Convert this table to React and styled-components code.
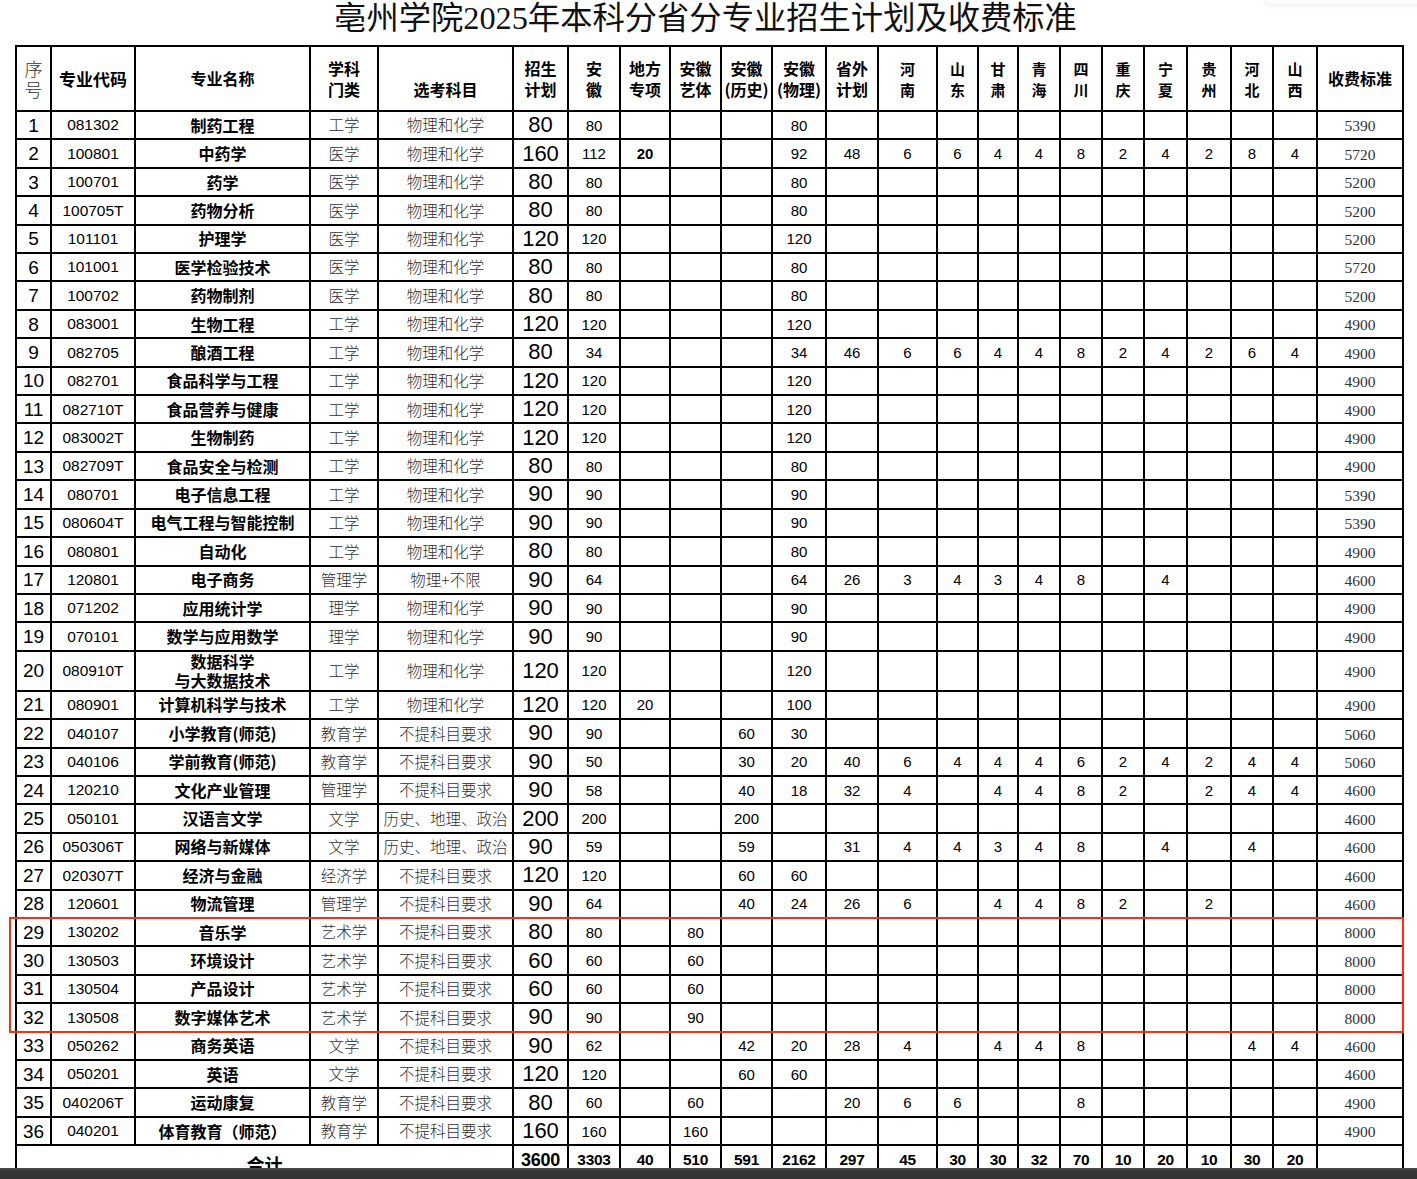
import React from "react";
import styled, { createGlobalStyle, css } from "styled-components";

const GlobalStyle = createGlobalStyle`
  html, body { margin: 0; padding: 0; background: #fff; }
  body { font-family: "Liberation Sans", "Noto Sans CJK SC", sans-serif; }
`;

const COLS = [35, 84, 175, 68, 135, 55, 52, 50, 51, 51, 54, 52, 59, 41, 40, 42, 42, 42, 43, 44, 42, 44, 86];
const HEADER_H = 65;
const ROW_H = 28.42;
const TALL_H = 38.5;

const rows = [
  [1, "081302", "制药工程", "工学", "物理和化学", "80 80 . . . 80", "5390"],
  [2, "100801", "中药学", "医学", "物理和化学", "160 112 *20 . . 92 48 6 6 4 4 8 2 4 2 8 4", "5720"],
  [3, "100701", "药学", "医学", "物理和化学", "80 80 . . . 80", "5200"],
  [4, "100705T", "药物分析", "医学", "物理和化学", "80 80 . . . 80", "5200"],
  [5, "101101", "护理学", "医学", "物理和化学", "120 120 . . . 120", "5200"],
  [6, "101001", "医学检验技术", "医学", "物理和化学", "80 80 . . . 80", "5720"],
  [7, "100702", "药物制剂", "医学", "物理和化学", "80 80 . . . 80", "5200"],
  [8, "083001", "生物工程", "工学", "物理和化学", "120 120 . . . 120", "4900"],
  [9, "082705", "酿酒工程", "工学", "物理和化学", "80 34 . . . 34 46 6 6 4 4 8 2 4 2 6 4", "4900"],
  [10, "082701", "食品科学与工程", "工学", "物理和化学", "120 120 . . . 120", "4900"],
  [11, "082710T", "食品营养与健康", "工学", "物理和化学", "120 120 . . . 120", "4900"],
  [12, "083002T", "生物制药", "工学", "物理和化学", "120 120 . . . 120", "4900"],
  [13, "082709T", "食品安全与检测", "工学", "物理和化学", "80 80 . . . 80", "4900"],
  [14, "080701", "电子信息工程", "工学", "物理和化学", "90 90 . . . 90", "5390"],
  [15, "080604T", "电气工程与智能控制", "工学", "物理和化学", "90 90 . . . 90", "5390"],
  [16, "080801", "自动化", "工学", "物理和化学", "80 80 . . . 80", "4900"],
  [17, "120801", "电子商务", "管理学", "物理+不限", "90 64 . . . 64 26 3 4 3 4 8 . 4", "4600"],
  [18, "071202", "应用统计学", "理学", "物理和化学", "90 90 . . . 90", "4900"],
  [19, "070101", "数学与应用数学", "理学", "物理和化学", "90 90 . . . 90", "4900"],
  [20, "080910T", ["数据科学", "与大数据技术"], "工学", "物理和化学", "120 120 . . . 120", "4900"],
  [21, "080901", "计算机科学与技术", "工学", "物理和化学", "120 120 20 . . 100", "4900"],
  [22, "040107", "小学教育(师范)", "教育学", "不提科目要求", "90 90 . . 60 30", "5060"],
  [23, "040106", "学前教育(师范)", "教育学", "不提科目要求", "90 50 . . 30 20 40 6 4 4 4 6 2 4 2 4 4", "5060"],
  [24, "120210", "文化产业管理", "管理学", "不提科目要求", "90 58 . . 40 18 32 4 . 4 4 8 2 . 2 4 4", "4600"],
  [25, "050101", "汉语言文学", "文学", "历史、地理、政治", "200 200 . . 200", "4600"],
  [26, "050306T", "网络与新媒体", "文学", "历史、地理、政治", "90 59 . . 59 . 31 4 4 3 4 8 . 4 . 4", "4600"],
  [27, "020307T", "经济与金融", "经济学", "不提科目要求", "120 120 . . 60 60", "4600"],
  [28, "120601", "物流管理", "管理学", "不提科目要求", "90 64 . . 40 24 26 6 . 4 4 8 2 . 2", "4600"],
  [29, "130202", "音乐学", "艺术学", "不提科目要求", "80 80 . 80", "8000"],
  [30, "130503", "环境设计", "艺术学", "不提科目要求", "60 60 . 60", "8000"],
  [31, "130504", "产品设计", "艺术学", "不提科目要求", "60 60 . 60", "8000"],
  [32, "130508", "数字媒体艺术", "艺术学", "不提科目要求", "90 90 . 90", "8000"],
  [33, "050262", "商务英语", "文学", "不提科目要求", "90 62 . . 42 20 28 4 . 4 4 8 . . . 4 4", "4600"],
  [34, "050201", "英语", "文学", "不提科目要求", "120 120 . . 60 60", "4600"],
  [35, "040206T", "运动康复", "教育学", "不提科目要求", "80 60 . 60 . . 20 6 6 . . 8", "4900"],
  [36, "040201", "体育教育（师范）", "教育学", "不提科目要求", "160 160 . 160", "4900"],
];

const totals = ["3600", "3303", "40", "510", "591", "2162", "297", "45", "30", "30", "32", "70", "10", "20", "10", "30", "20"];

const headers = [
  { lines: ["招生", "计划"] },
  { lines: ["安", "徽"] },
  { lines: ["地方", "专项"] },
  { lines: ["安徽", "艺体"] },
  { lines: ["安徽", "(历史)"] },
  { lines: ["安徽", "(物理)"] },
  { lines: ["省外", "计划"] },
  { lines: ["河", "南"], small: true },
  { lines: ["山", "东"], small: true },
  { lines: ["甘", "肃"], small: true },
  { lines: ["青", "海"], small: true },
  { lines: ["四", "川"], small: true },
  { lines: ["重", "庆"], small: true },
  { lines: ["宁", "夏"], small: true },
  { lines: ["贵", "州"], small: true },
  { lines: ["河", "北"], small: true },
  { lines: ["山", "西"], small: true },
];

const fill = (s) => {
  const t = s.split(" ").map((v) => (v === "." ? "" : v));
  while (t.length < 17) t.push("");
  return t;
};

const Page = styled.div`
  position: relative;
  height: 1179px;
  overflow: hidden;
  display: flex;
  flex-direction: column;
  background: #fff;
`;

const Title = styled.h1`
  flex: none;
  margin: 0;
  height: 45px;
  padding-right: 6px;
  font: 400 32.3px/36px "Liberation Serif", "Noto Sans CJK SC", serif;
  color: #111;
  text-align: center;
  white-space: nowrap;
`;

const TableArea = styled.div`
  flex: 1;
  min-height: 0;
  overflow: hidden;
  padding-left: 15px;
`;

const Sheet = styled.table`
  border-collapse: collapse;
  table-layout: fixed;
  width: ${COLS.reduce((a, b) => a + b, 0)}px;
  color: #000;
`;

const HeadRow = styled.tr`
  height: ${HEADER_H}px;
`;

const BodyRow = styled.tr`
  height: ${(p) => (p.$tall ? TALL_H : ROW_H)}px;
`;

const FootRow = styled.tr`
  height: 30px;
`;

const HeadCell = styled.th`
  border: 2px solid #000;
  padding: ${(p) => (p.$low ? "21px 0 0" : "0")};
  text-align: center;
  vertical-align: middle;
  white-space: nowrap;
  font-family: "Noto Sans CJK SC", sans-serif;
  font-weight: 700;
  font-size: ${(p) => p.$size || 16}px;
  line-height: 21px;
  ${(p) =>
    p.$song &&
    css`
      font-weight: 300;
      color: #333;
      font-size: 18px;
    `}
`;

const kinds = {
  seq: css`
    font: 400 19px/1 "Liberation Sans", sans-serif;
  `,
  code: css`
    font: 400 15.5px/1 "Liberation Sans", sans-serif;
  `,
  name: css`
    font: 700 16px/19px "Noto Sans CJK SC", sans-serif;
  `,
  song: css`
    font: 300 15.5px/1 "Noto Sans CJK SC", sans-serif;
    color: #2e2e2e;
  `,
  plan: css`
    font: 400 22px/1 "Liberation Sans", sans-serif;
  `,
  num: css`
    font: 400 15px/1 "Liberation Sans", sans-serif;
  `,
  bold: css`
    font: 700 15px/1 "Liberation Sans", sans-serif;
  `,
  fee: css`
    font: 400 15.5px/1 "Liberation Serif", serif;
    color: #333;
    padding-top: 2px;
  `,
  total: css`
    font: 700 18px/1 "Noto Sans CJK SC", sans-serif;
    padding-top: 8px;
  `,
  sum: css`
    font: 700 15.5px/1 "Liberation Sans", sans-serif;
    letter-spacing: -0.3px;
  `,
  sumBig: css`
    font: 700 18px/1 "Liberation Sans", sans-serif;
    letter-spacing: -0.3px;
  `,
};

const Cell = styled.td`
  border: 2px solid #000;
  padding: 0;
  text-align: center;
  vertical-align: middle;
  white-space: nowrap;
  overflow: hidden;
  ${(p) => kinds[p.$kind || "num"]}
`;

const Highlight = styled.div`
  position: absolute;
  left: 9px;
  top: 917px;
  width: 1395px;
  height: 116px;
  box-sizing: border-box;
  border: 2.5px solid #ff2d0f;
  pointer-events: none;
`;

const ViewerShade = styled.div`
  position: absolute;
  right: -12px;
  top: -30px;
  width: 165px;
  height: 34px;
  border-radius: 8px;
  background: #fbfbfb;
  box-shadow: 0 2px 6px rgba(0, 0, 0, 0.06);
  pointer-events: none;
`;

const BottomBar = styled.div`
  flex: none;
  height: 11px;
  background: linear-gradient(#4a4a4a, #363636 3px, #333);
`;

export default function App() {
  return (
    <>
      <GlobalStyle />
      <Page>
        <Title>亳州学院2025年本科分省分专业招生计划及收费标准</Title>
        <TableArea>
          <Sheet>
            <colgroup>
              {COLS.map((w, i) => (
                <col key={i} style={{ width: w }} />
              ))}
            </colgroup>
            <thead>
              <HeadRow>
                <HeadCell $song>
                  序<br />号
                </HeadCell>
                <HeadCell $size={17}>专业代码</HeadCell>
                <HeadCell>专业名称</HeadCell>
                <HeadCell>
                  学科<br />门类
                </HeadCell>
                <HeadCell $low>选考科目</HeadCell>
                {headers.map((h, i) => (
                  <HeadCell key={i} $size={h.small ? 15 : 16}>
                    {h.lines[0]}
                    <br />
                    {h.lines[1]}
                  </HeadCell>
                ))}
                <HeadCell>收费标准</HeadCell>
              </HeadRow>
            </thead>
            <tbody>
              {rows.map(([n, code, name, cat, subj, data, fee]) => {
                const vals = fill(data);
                const tall = Array.isArray(name);
                return (
                  <BodyRow key={n} $tall={tall}>
                    <Cell $kind="seq">{n}</Cell>
                    <Cell $kind="code">{code}</Cell>
                    <Cell $kind="name">
                      {tall ? (
                        <>
                          {name[0]}
                          <br />
                          {name[1]}
                        </>
                      ) : (
                        name
                      )}
                    </Cell>
                    <Cell $kind="song">{cat}</Cell>
                    <Cell $kind="song">{subj}</Cell>
                    {vals.map((v, i) => {
                      const bold = v.startsWith("*");
                      return (
                        <Cell key={i} $kind={i === 0 ? "plan" : bold ? "bold" : "num"}>
                          {bold ? v.slice(1) : v}
                        </Cell>
                      );
                    })}
                    <Cell $kind="fee">{fee}</Cell>
                  </BodyRow>
                );
              })}
              <FootRow>
                <Cell $kind="total" colSpan={5}>
                  合计
                </Cell>
                {totals.map((t, i) => (
                  <Cell key={i} $kind={i === 0 ? "sumBig" : "sum"}>
                    {t}
                  </Cell>
                ))}
                <Cell $kind="sum" />
              </FootRow>
            </tbody>
          </Sheet>
        </TableArea>
        <BottomBar />
        <Highlight />
        <ViewerShade />
      </Page>
    </>
  );
}
